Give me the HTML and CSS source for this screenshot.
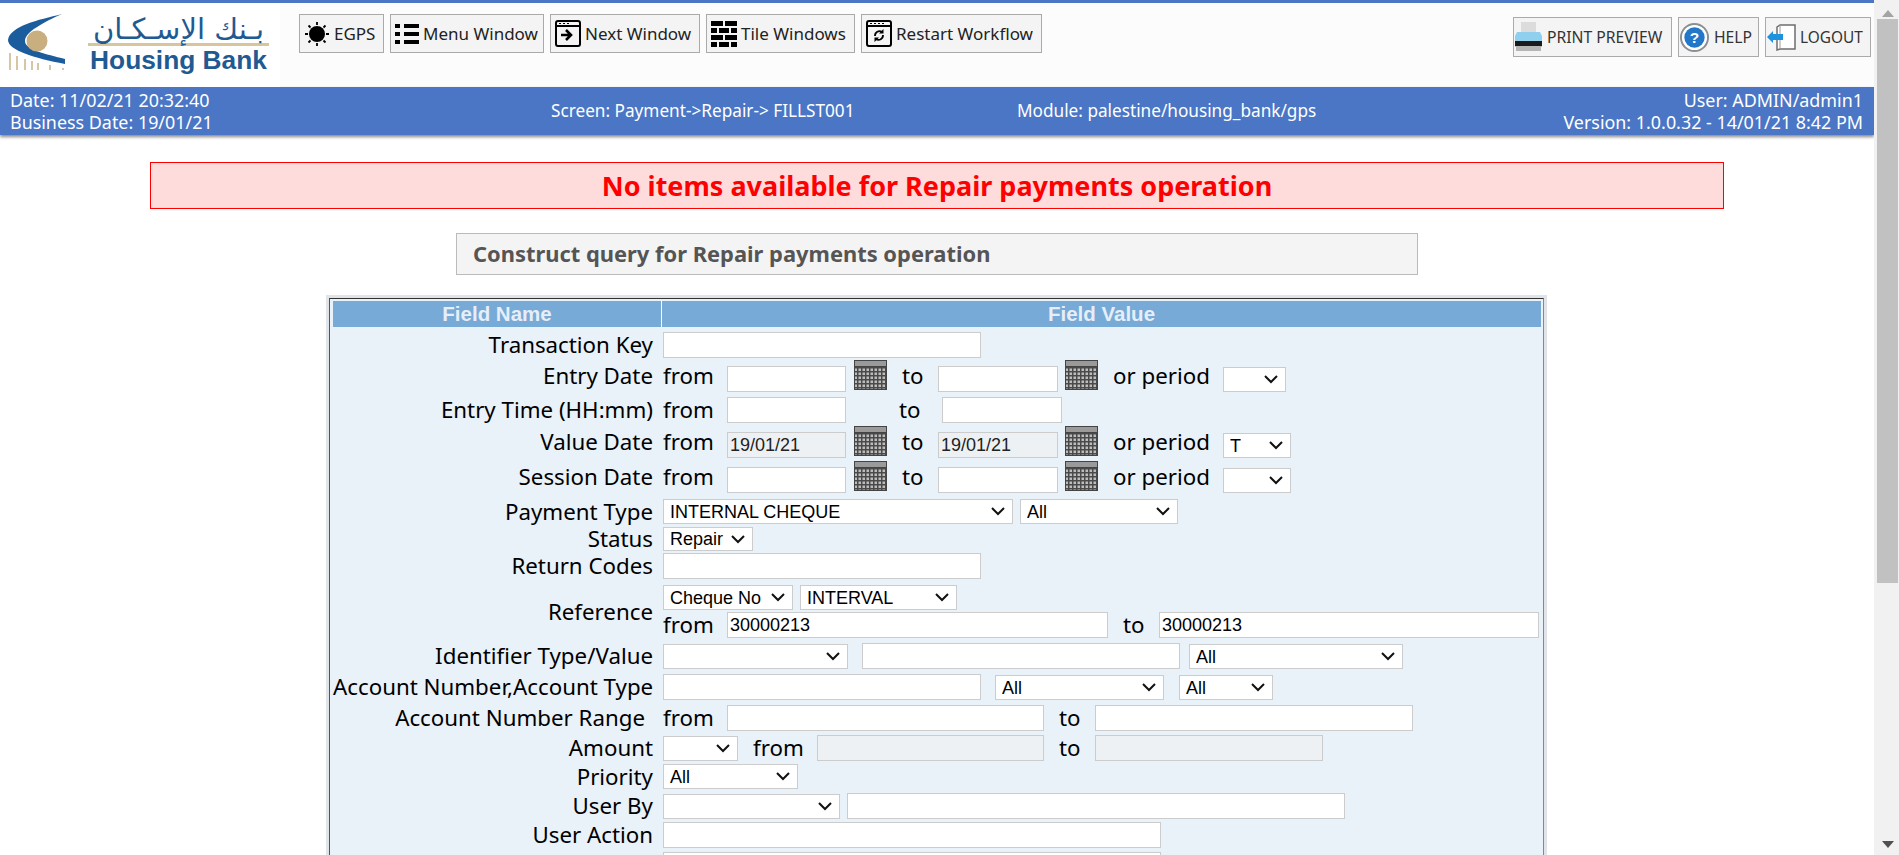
FILE: index.html

```html
<!DOCTYPE HTML>
<html>
<head>
<meta charset="utf-8">
<title>Repair payments</title>
<link rel="stylesheet" href="styles.css">
</head>

<body>
<div class="page">
	<div class="top">
		<div class="logo">
			<svg class="logo-mark" width="60" height="58" viewBox="0 0 60 58">
				<path d="M2 39V56M9 42V56M17 45V56M24 47V56M30 49V56M42 51V56M55 54V56" stroke="#d6c6a6" stroke-width="2"/>
				<path d="M54 0C30 6 2 12 0 26C0 36 26 44 57 50L57 45C38 40 17 36 17 27C17 18 36 8 54 0Z" fill="#1b5c9c"/>
				<circle cx="29" cy="27" r="10.500" fill="#c9ae80"/>
			</svg>
			<div class="logo-text">
				<div class="logo-ar" dir="rtl">بـنك الإسـكـان</div>
				<div class="logo-rule"></div>
				<div class="logo-en">Housing Bank</div>
			</div>
		</div>
		<div class="tools">
			<a class="btn btn-egps">
				<svg width="26" height="26" viewBox="0 0 26 26"><circle cx="13" cy="13" r="8"/><path d="M13 1V4M13 22V25M1 13H4M22 13H25M4.500 4.500L6.500 6.500M19.500 19.500L21.500 21.500M21.500 4.500L19.500 6.500M6.500 19.500L4.500 21.500" stroke="#000" stroke-width="1.800" fill="none"/></svg>
				EGPS
			</a>
			<a class="btn btn-menu">
				<svg width="24" height="24" viewBox="0 0 24 24"><path d="M0 2h5v4H0zM9 2h15v4H9zM0 10h5v4H0zM9 10h15v4H9zM0 18h5v4H0zM9 18h15v4H9z"/></svg>
				Menu Window
			</a>
			<a class="btn btn-next">
				<svg width="26" height="27" viewBox="0 0 26 27"><rect x="1" y="1" width="24" height="25" rx="2" fill="none" stroke="#000" stroke-width="2"/><path d="M1 6H25" stroke="#000" stroke-width="2"/><path d="M4 3.500h2M8 3.500h2M12 3.500h2" stroke="#000"/><path d="M6 15h9M11 10l5 5-5 5" stroke="#000" stroke-width="2.600" fill="none"/></svg>
				Next Window
			</a>
			<a class="btn btn-tile">
				<svg width="26" height="26" viewBox="0 0 26 26"><path d="M0 0h12v5H0zM14 0h12v5H14zM0 7h6v5H0zM8 7h10v5H8zM20 7h6v5h-6zM0 14h12v5H0zM14 14h12v5H14zM0 21h6v5H0zM8 21h10v5H8zM20 21h6v5h-6z"/></svg>
				Tile Windows
			</a>
			<a class="btn btn-restart">
				<svg width="26" height="27" viewBox="0 0 26 27"><rect x="1" y="1" width="24" height="25" rx="2" fill="none" stroke="#000" stroke-width="2"/><path d="M1 6H25" stroke="#000" stroke-width="2"/><path d="M4 3.500h2M8 3.500h2M12 3.500h2M16 3.500h2" stroke="#000"/><path d="M9 16a4.500 4.500 0 0 1 7-4M17 15a4.500 4.500 0 0 1-7 4" stroke="#000" stroke-width="1.800" fill="none"/><path d="M17.500 9v4.500H13zM8.500 22v-4.500H13z"/></svg>
				Restart Workflow
			</a>
			<div class="tools-right">
				<a class="btn btn-print">
					<svg width="27" height="32" viewBox="0 0 27 32"><path d="M6 1h15v11H6z" fill="#dcdcdc"/><path d="M2 11h23l2 4v11H0V15z" fill="#8fd0ee"/><path d="M0 20h27v5H0z" fill="#1a1a1a"/><path d="M1 25h25v5H1z" fill="#b5b5b5"/></svg>
					PRINT PREVIEW
				</a>
				<a class="btn btn-help">
					<svg width="29" height="29" viewBox="0 0 30 30"><circle cx="15" cy="15" r="14" fill="#fff" stroke="#8a8f94" stroke-width="2"/><circle cx="15" cy="15" r="10.500" fill="#2277c9"/><text x="15" y="21" class="help-mark">?</text></svg>
					HELP
				</a>
				<a class="btn btn-logout">
					<svg width="30" height="27" viewBox="0 0 30 27"><path d="M10 3L13 1H28V25H13L10 26z" fill="#fff" stroke="#6d6d6d" stroke-width="1.500"/><path d="M13 1V25" stroke="#9a9a9a"/><path d="M0 13L6 7V10H16V16H6V19z" fill="#1d93df"/></svg>
					LOGOUT
				</a>
			</div>
		</div>
	</div>
	<div class="bar">
		<div class="bar-side">Date: 11/02/21 20:32:40<br>Business Date: 19/01/21</div>
		<div>Screen: Payment-&gt;Repair-&gt; FILLST001</div>
		<div>Module: palestine/housing_bank/gps</div>
		<div class="bar-side bar-right">User: ADMIN/admin1<br>Version: 1.0.0.32 - 14/01/21 8:42 PM</div>
	</div>

	<div class="msg">No items available for Repair payments operation</div>
	<div class="sub">Construct query for Repair payments operation</div>

	<div class="frame">
		<div class="panel">
			<div class="head">
				<div class="head-name">Field Name</div>
				<div class="head-value">Field Value</div>
			</div>

			<div class="row g-5">
				<label>Transaction Key</label>
				<div class="val"><input class="w-318"></div>
			</div>
			<div class="row g-2">
				<label>Entry Date</label>
				<div class="val">
					<span class="from">from</span><input class="w-119">
					<svg class="cal"><use href="#cal"/></svg>
					<span class="to">to</span><input class="w-120">
					<svg class="cal cal-2"><use href="#cal"/></svg>
					<span class="period">or period</span><select class="w-63"><option></option></select>
				</div>
			</div>
			<div class="row g-5">
				<label>Entry Time (HH:mm)</label>
				<div class="val">
					<span class="from">from</span><input class="w-119">
					<span class="to to-wide">to</span><input class="w-120">
				</div>
			</div>
			<div class="row g-3">
				<label>Value Date</label>
				<div class="val">
					<span class="from">from</span><input class="w-119" value="19/01/21" disabled>
					<svg class="cal"><use href="#cal"/></svg>
					<span class="to">to</span><input class="w-120" value="19/01/21" disabled>
					<svg class="cal cal-2"><use href="#cal"/></svg>
					<span class="period">or period</span><select class="w-68"><option>T</option></select>
				</div>
			</div>
			<div class="row g-3">
				<label>Session Date</label>
				<div class="val">
					<span class="from">from</span><input class="w-119">
					<svg class="cal"><use href="#cal"/></svg>
					<span class="to">to</span><input class="w-120">
					<svg class="cal cal-2"><use href="#cal"/></svg>
					<span class="period">or period</span><select class="w-68"><option></option></select>
				</div>
			</div>
			<div class="row g-6">
				<label>Payment Type</label>
				<div class="val">
					<select class="w-350"><option>INTERNAL CHEQUE</option></select>
					<select class="w-158 ml-7"><option>All</option></select>
				</div>
			</div>
			<div class="row g-3">
				<label>Status</label>
				<div class="val"><select class="w-90 short"><option>Repair</option></select></div>
			</div>
			<div class="row g-2">
				<label>Return Codes</label>
				<div class="val"><input class="w-318"></div>
			</div>
			<div class="row g-6">
				<label>Reference</label>
				<div class="val val-stack">
					<div class="val">
						<select class="w-130"><option>Cheque No</option></select>
						<select class="w-157 ml-7"><option>INTERVAL</option></select>
					</div>
					<div class="val line-2">
						<span class="from">from</span><input class="w-381" value="30000213">
						<span class="to">to</span><input class="w-380" value="30000213">
					</div>
				</div>
			</div>
			<div class="row g-5">
				<label>Identifier Type/Value</label>
				<div class="val">
					<select class="w-185"><option></option></select>
					<input class="w-318 ml-14">
					<select class="w-214 ml-9"><option>All</option></select>
				</div>
			</div>
			<div class="row g-5">
				<label>Account Number,Account Type</label>
				<div class="val">
					<input class="w-318">
					<select class="w-169 ml-14"><option>All</option></select>
					<select class="w-94 ml-15"><option>All</option></select>
				</div>
			</div>
			<div class="row g-5">
				<label class="lbl-in">Account Number Range</label>
				<div class="val">
					<span class="from">from</span><input class="w-317">
					<span class="to">to</span><input class="w-318">
				</div>
			</div>
			<div class="row g-4">
				<label>Amount</label>
				<div class="val">
					<select class="w-75"><option></option></select>
					<span class="from ml-15">from</span><input class="w-227" disabled>
					<span class="to">to</span><input class="w-228" disabled>
				</div>
			</div>
			<div class="row g-3">
				<label>Priority</label>
				<div class="val"><select class="w-135"><option>All</option></select></div>
			</div>
			<div class="row g-4">
				<label>User By</label>
				<div class="val">
					<select class="w-177"><option></option></select>
					<input class="w-498 ml-7">
				</div>
			</div>
			<div class="row g-3">
				<label>User Action</label>
				<div class="val"><input class="w-498"></div>
			</div>
			<div class="row g-4">
				<label></label>
				<div class="val"><input class="w-498"></div>
			</div>
		</div>
	</div>
</div>

<div class="scroll">
	<div class="arrow-up"></div>
	<div class="thumb"></div>
	<div class="arrow-down"></div>
</div>

<svg class="defs" width="0" height="0">
	<defs>
		<pattern id="dots" width="4" height="4" patternUnits="userSpaceOnUse">
			<rect width="4" height="4" fill="#4a4a4a"/>
			<rect x="0.500" y="0.500" width="2.500" height="2.500" fill="#bdbdbd"/>
		</pattern>
		<symbol id="cal" viewBox="0 0 33 30">
			<rect width="33" height="30" fill="#444"/>
			<rect x="1" y="1" width="31" height="5" fill="#9a9a9a"/>
			<rect x="1" y="7" width="31" height="22" fill="url(#dots)"/>
		</symbol>
	</defs>
</svg>
</body>
</html>
```

FILE: styles.css

```css
* {margin:0; padding:0; box-sizing:border-box;}
html, body {height:855px; overflow:hidden; background:#fff;}
body {display:flex; font-family:"Noto Sans", "DejaVu Sans", sans-serif; color:#000;}
.page {flex:1; min-width:0;}
.defs {position:absolute;}

/* header */
.top {display:flex; height:87px; border-top:3px solid #4a76c5; background:#fcfcfc;}
.logo {width:280px; background:#fff; display:flex; padding:11px 0 0 8px;}
.logo-mark {display:block;}
.logo-text {width:181px; margin-left:20px; color:#1f5a92;}
.logo-ar {font-family:"DejaVu Sans", sans-serif; font-size:29px; line-height:30px; height:29px; text-align:center; color:#1f5a92; white-space:nowrap;}
.logo-rule {height:3px; background:#d9c49c;}
.logo-en {font-family:"Liberation Sans", sans-serif; font-weight:bold; font-size:26.300px; line-height:29px; text-align:center; white-space:nowrap;}
.tools {flex:1; display:flex; gap:6px; padding:11px 3px 0 19px;}
.tools-right {margin-left:auto; display:flex; gap:6px; padding-top:3px;}
.btn {display:flex; align-items:center; height:39px; padding:0 5px 0 4px; gap:4px; background:#f4f4f4; border:1px solid #aaa; font-size:17px; color:#222; white-space:nowrap;}
.tools-right .btn {height:40px; padding-left:1px; gap:5px; font-size:15.700px; color:#333;}
.tools-right .btn-logout {gap:3px; font-size:15.400px;}
.btn-egps {width:85px;}
.btn-menu {width:154px;}
.btn-next {width:150px;}
.btn-tile {width:149px;}
.btn-restart {width:181px;}
.btn-print {width:159px;}
.btn-help {width:81px;}
.btn-logout {width:106px;}
.btn svg {flex:none;}
.help-mark {font-family:"Liberation Sans", sans-serif; font-weight:bold; font-size:16px; text-anchor:middle; fill:#fff;}

.bar {display:grid; grid-template-columns:541px 466px 1fr auto; align-items:center; height:48px; padding:0 11px 0 10px; background:#4a76c5; color:#fff; font-size:17.200px; line-height:22px; box-shadow:0 2px 3px #888; white-space:nowrap;}
.bar-side {font-size:17.900px;}
.bar-right {text-align:right;}

/* messages */
.msg {width:1574px; height:47px; margin:27px auto 0; background:#ffdcdc; border:1px solid #f00; color:#f00; font-size:27px; font-weight:bold; line-height:45px; text-align:center;}
.sub {width:962px; height:42px; margin:24px auto 0; padding-left:16px; background:#f4f4f4; border:1px solid #bbb; color:#555; font-size:21.900px; font-weight:bold; line-height:40px;}

/* query form */
.frame {width:1221px; margin:20px 0 0 326px; border:3px solid #e0e4e8; border-bottom:0;}
.panel {height:700px; background:#e9f1f9; border:1px solid #888; border-top-color:#333; border-left-color:#555; padding:2px 2px 0 3px;}
.head {display:flex; height:26px; background:#77aad6; color:#e6eef7; font-family:"Liberation Sans", sans-serif; font-size:20.500px; font-weight:bold; line-height:26px; text-align:center;}
.head-name {width:329px; border-right:1px solid #fff;}
.head-value {flex:1;}

.row {display:flex;}
.row label {width:320px; flex:none; margin-right:10px; font-size:22.300px; line-height:24px; text-align:right; white-space:nowrap; align-self:center;}
.row .lbl-in {width:312px; margin-right:18px;}
.val {display:flex; align-items:flex-end; font-size:22.300px; white-space:nowrap;}
.val-stack {display:block;}
.line-2 {margin-top:2px;}
.val span {align-self:center; line-height:24px;}
.from {width:64px; flex:none;}
.to {width:51px; flex:none; padding-left:15px;}
.to-wide {width:96px; padding-left:53px;}
.period {width:125px; flex:none; padding-left:15px;}
.cal {width:33px; height:30px; margin:0 0 2px 8px; align-self:flex-start; flex:none;}
.cal-2 {margin-left:7px;}

input, select {height:26px; border:1px solid #ccc; background-color:#fff; color:#000; font-family:"Liberation Sans", sans-serif; font-size:18px; flex:none;}
input {padding:0 2px;}
select {height:25px; padding-left:6px; appearance:none; background-repeat:no-repeat; background-position:right 7px center; background-size:14px 9px; background-image:url("data:image/svg+xml,%3Csvg xmlns='http://www.w3.org/2000/svg' viewBox='0 0 14 9'%3E%3Cpath d='M1 1l6 6 6-6' fill='none' stroke='%23111' stroke-width='2'/%3E%3C/svg%3E");}
select.short {height:24px;}
input:disabled {background:#eef1f4; color:#222;}

.g-2 {margin-top:2px;}
.g-3 {margin-top:3px;}
.g-4 {margin-top:4px;}
.g-5 {margin-top:5px;}
.g-6 {margin-top:6px;}
.ml-7 {margin-left:7px;}
.ml-9 {margin-left:9px;}
.ml-14 {margin-left:14px;}
.ml-15 {margin-left:15px;}
.w-63 {width:63px;}
.w-68 {width:68px;}
.w-75 {width:75px;}
.w-90 {width:90px;}
.w-94 {width:94px;}
.w-119 {width:119px;}
.w-120 {width:120px;}
.w-130 {width:130px;}
.w-135 {width:135px;}
.w-157 {width:157px;}
.w-158 {width:158px;}
.w-169 {width:169px;}
.w-177 {width:177px;}
.w-185 {width:185px;}
.w-214 {width:214px;}
.w-227 {width:227px;}
.w-228 {width:228px;}
.w-317 {width:317px;}
.w-318 {width:318px;}
.w-350 {width:350px;}
.w-380 {width:380px;}
.w-381 {width:381px;}
.w-498 {width:498px;}

/* fake scrollbar, the shot has one wider than the browser's own */
.scroll {width:25px; flex:none; background:#f1f1f1; display:flex; flex-direction:column; align-items:center; height:855px; padding:0 0 0 2px;}
.arrow-up {margin-top:10px; border:6px solid transparent; border-top:0; border-bottom:7px solid #a3a3a3;}
.thumb {width:21px; height:564px; margin-top:2px; background:#c1c1c1;}
.arrow-down {margin-top:auto; margin-bottom:7px; border:6px solid transparent; border-bottom:0; border-top:7px solid #505050;}
```
